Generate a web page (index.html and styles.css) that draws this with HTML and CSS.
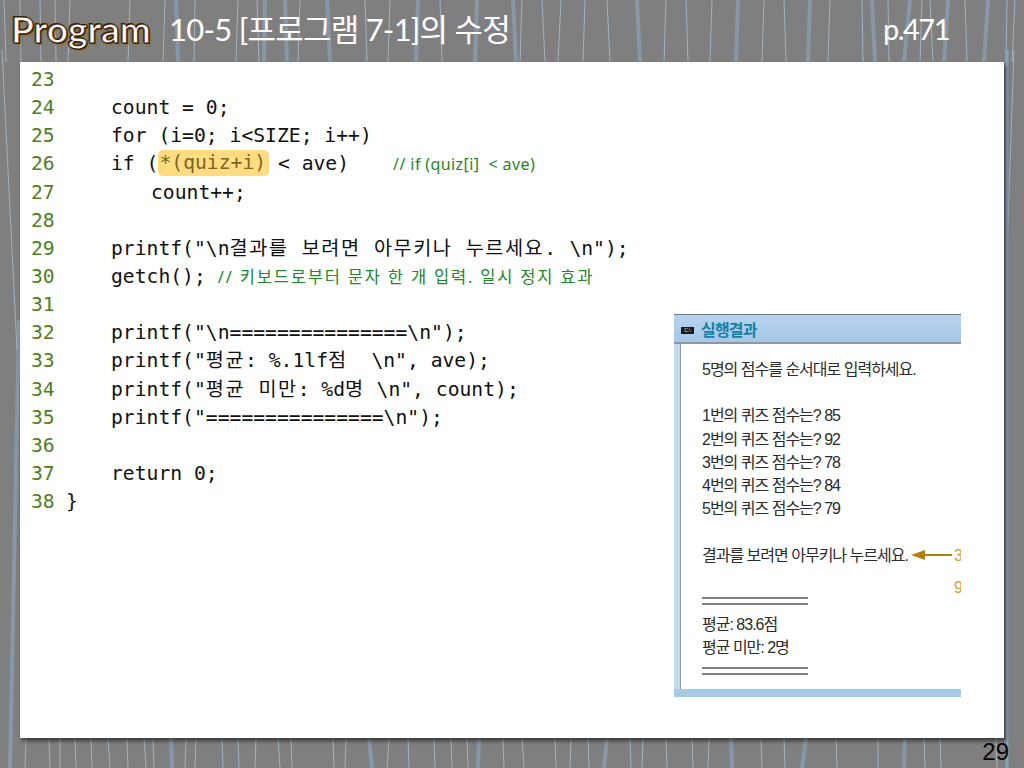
FILE: index.html
```html
<!DOCTYPE html>
<html lang="ko">
<head>
<meta charset="utf-8">
<title>10-5 프로그램 7-1의 수정</title>
<link rel="stylesheet" href="styles.css">
</head>
<body>
<svg class="rain" width="1024" height="768" viewBox="0 0 1024 768" aria-hidden="true">
  <path class="wide" d="M176 0L178 62M265 0L264 62M285 0L287 62M327 0L330 62M418 0L416 62M477 0L475 62M513 0L516 62M637 0L640 62M738 0L736 62M810 0L808 62M872 0L875 62M910 0L904 62M948 0L944 62M988 0L984 62M171 738L172 768M369 738L372 768M479 738L478 768M607 738L604 768M731 738L732 768M806 738L802 768M905 738L904 768M19 320L10 768"/>
  <path class="thin" d="M4 0L6 62M20 0L21 62M40 0L41 62M55 0L56 62M70 0L68 62M130 0L128 62M165 0L163 62M195 0L194 62M238 0L236 62M257 0L259 62M300 0L298 62M365 0L367 62M390 0L388 62M440 0L442 62M522 0L520 62M542 0L545 62M561 0L558 62M585 0L583 62M607 0L610 62M666 0L664 62M686 0L688 62M712 0L710 62M764 0L762 62M784 0L786 62M830 0L828 62M862 0L863 62M888 0L889 62M922 0L920 62M930 0L933 62M965 0L967 62M1007 0L1006 62M1015 0L1012 62M26 738L25 768M49 738L50 768M60 738L60 768M75 738L76 768M91 738L92 768M108 738L110 768M127 738L128 768M144 738L146 768M153 738L154 768M186 738L185 768M196 738L195 768M222 738L223 768M238 738L239 768M256 738L255 768M278 738L280 768M291 738L292 768M333 738L334 768M346 738L345 768M389 738L387 768M408 738L409 768M434 738L435 768M451 738L452 768M467 738L468 768M503 738L504 768M522 738L524 768M555 738L556 768M571 738L570 768M588 738L589 768M630 738L631 768M643 738L642 768M666 738L667 768M692 738L693 768M709 738L708 768M761 738L762 768M784 738L785 768M836 738L837 768M878 738L878 768M924 738L925 768M940 738L941 768M996 738L997 768M2 50L17 350M1014 50L1007 250"/>
  <path class="edge" d="M1007 50L1007 768"/>
</svg>

<header class="top">
  <span class="logo">Program</span>
  <h1 class="title">10-5 [프로그램 7-1]의 수정</h1>
  <span class="ref">p.471</span>
</header>

<main class="sheet">
  <div class="code">
    <div class="row"><span class="num">23</span><span class="src"></span></div>
    <div class="row"><span class="num">24</span><span class="src i1">count = 0;</span></div>
    <div class="row"><span class="num">25</span><span class="src i1">for (i=0; i&lt;SIZE; i++)</span></div>
    <div class="row"><span class="num">26</span><span class="src i1">if (<span class="mark">*(quiz+i)</span> &lt; ave)<span class="note note-if">// if (quiz[i] &nbsp;&lt; ave)</span></span></div>
    <div class="row"><span class="num">27</span><span class="src i2">count++;</span></div>
    <div class="row"><span class="num">28</span><span class="src"></span></div>
    <div class="row"><span class="num">29</span><span class="src i1">printf("\n<span class="ko">결과를 보려면 아무키나 누르세요.</span> \n");</span></div>
    <div class="row"><span class="num">30</span><span class="src i1">getch();<span class="note note-getch">// 키보드로부터 문자 한 개 입력. 일시 정지 효과</span></span></div>
    <div class="row"><span class="num">31</span><span class="src"></span></div>
    <div class="row"><span class="num">32</span><span class="src i1">printf("\n===============\n");</span></div>
    <div class="row"><span class="num">33</span><span class="src i1">printf("<span class="ko">평균</span>: %.1lf<span class="ko">점</span>  \n", ave);</span></div>
    <div class="row"><span class="num">34</span><span class="src i1">printf("<span class="ko">평균 미만</span>: %d<span class="ko">명</span> \n", count);</span></div>
    <div class="row"><span class="num">35</span><span class="src i1">printf("===============\n");</span></div>
    <div class="row"><span class="num">36</span><span class="src"></span></div>
    <div class="row"><span class="num">37</span><span class="src i1">return 0;</span></div>
    <div class="row"><span class="num">38</span><span class="src">}</span></div>
  </div>

  <section class="console">
    <div class="bar">
      <span class="bar-icon">C:\</span>
      <span class="bar-title">실행결과</span>
    </div>
    <div class="output">
      <div class="out">5명의 점수를 순서대로 입력하세요.</div>
      <div class="out"></div>
      <div class="out">1번의 퀴즈 점수는? 85</div>
      <div class="out">2번의 퀴즈 점수는? 92</div>
      <div class="out">3번의 퀴즈 점수는? 78</div>
      <div class="out">4번의 퀴즈 점수는? 84</div>
      <div class="out">5번의 퀴즈 점수는? 79</div>
      <div class="out"></div>
      <div class="out">결과를 보려면 아무키나 누르세요.<svg class="arrow" width="41" height="12" viewBox="0 0 41 12" aria-hidden="true"><path d="M0 6L14 1V5H41V7H14V11Z"/></svg><span class="callout">3</span></div>
      <div class="out"><span class="callout callout-two">9</span></div>
      <div class="out"><span class="rule"></span></div>
      <div class="out">평균: 83.6점</div>
      <div class="out">평균 미만: 2명</div>
      <div class="out"><span class="rule"></span></div>
    </div>
  </section>
</main>

<footer class="foot">29</footer>
</body>
</html>
```

FILE: styles.css
```css
* { box-sizing: border-box; }

html, body { margin: 0; padding: 0; }

body {
  position: relative;
  width: 1024px;
  height: 768px;
  overflow: hidden;
  background: #7f7f7f;
  font-family: "Liberation Sans", "Noto Sans CJK KR", sans-serif;
}

.rain { position: absolute; left: 0; top: 0; }
.rain .wide { stroke: #8aa5bf; stroke-width: 4; fill: none; opacity: .65; }
.rain .thin { stroke: #b4c6d6; stroke-width: 1; fill: none; opacity: .7; }
.rain .edge { stroke: #8aa3bb; stroke-width: 3; fill: none; }

.top {
  position: relative;
  height: 62px;
  display: flex;
  align-items: center;
  padding: 0 75px 4px 11px;
}

.logo {
  width: 158px;
  font-family: "Lato", sans-serif;
  font-weight: 700;
  font-size: 37px;
  line-height: 44px;
  color: #fff8f2;
  -webkit-text-stroke: 1px #3a2212;
  text-shadow: 0 0 1px #3a2212, 1px 1px 0 #3a2212, -1px -1px 0 #3a2212, 2px 2px 2px #8d7434, -2px -1px 2px #8d7434;
}

.title {
  flex: 1;
  margin: 0;
  font-family: "Lato", "Noto Sans CJK KR", sans-serif;
  font-weight: 400;
  font-size: 31px;
  line-height: 40px;
  letter-spacing: -.75px;
  color: #fff;
}

.ref {
  font-family: "Lato", sans-serif;
  font-weight: 400;
  font-size: 29px;
  line-height: 40px;
  letter-spacing: -1.5px;
  color: #fff;
}

.sheet {
  position: relative;
  height: 676px;
  margin: 0 20px;
  padding: 4px 0 0 11px;
  background: #fff;
  box-shadow: 2px 3px 4px rgba(0, 0, 0, .55);
}

.code {
  font-family: "DejaVu Sans Mono", "Noto Sans CJK KR", monospace;
  font-size: 19.7px;
  line-height: 28.15px;
  color: #111;
}

.row { display: flex; height: 28.15px; white-space: pre; }
.num { width: 35px; color: #4f7f22; }
.src { display: block; }
.i1 { padding-left: 45px; }
.i2 { padding-left: 85px; }

.ko { letter-spacing: 1.5px; }

.mark {
  display: inline-block;
  height: 26px;
  line-height: 26px;
  padding: 0 3px 0 1px;
  margin-right: -3px;
  background: #ffdc80;
  border-radius: 5px;
  color: #7d6426;
  vertical-align: top;
}

.note {
  font-family: "Noto Sans", "Noto Sans CJK KR", sans-serif;
  color: #23862e;
  vertical-align: top;
}
.note-if { margin-left: 44px; font-size: 16px; letter-spacing: .4px; }
.note-getch { margin-left: 12px; font-size: 16.5px; letter-spacing: 1.8px; }

.console {
  position: absolute;
  left: 654px;
  top: 252px;
  width: 287px;
  height: 383px;
  overflow: hidden;
  background: #c6d9ec;
  border-top: 1px solid #6e7a84;
  border-bottom: 8px solid #a8cbe6;
  display: flex;
  flex-direction: column;
}

.bar {
  flex: none;
  height: 29px;
  display: flex;
  align-items: center;
  gap: 7px;
  padding-left: 7px;
  background: linear-gradient(#b8d4ee, #a5c8e6);
  border-bottom: 2px solid #8b98a3;
}

.bar-icon {
  width: 13px;
  height: 7px;
  background: #1a1a1a;
  color: #ddd;
  font-size: 5px;
  line-height: 7px;
  text-align: center;
  margin-top: 3px;
}

.bar-title {
  font-size: 16px;
  font-weight: 700;
  letter-spacing: -.8px;
  color: #1580a8;
}

.output {
  flex: 1;
  margin-left: 6px;
  padding: 14px 0 0 21px;
  background: #fff;
  border-left: 1px solid #8d99a6;
  font-size: 16px;
  letter-spacing: -1px;
  color: #2c2c2c;
}

.out {
  height: 23.2px;
  line-height: 23.2px;
  white-space: nowrap;
  display: flex;
  align-items: center;
}

.arrow { margin-left: 3px; flex: none; }
.arrow path { fill: #b57f10; }

.callout { margin-left: 2px; color: #d99b3c; }
.callout-two { margin-left: 252px; margin-top: 18px; }

.rule {
  display: block;
  width: 106px;
  height: 8px;
  border-top: 2px solid #808080;
  border-bottom: 2px solid #808080;
}

.foot {
  position: relative;
  height: 30px;
  padding: 2px 15px 0 0;
  text-align: right;
  font-size: 24px;
  line-height: 24px;
  color: #050505;
}
```
